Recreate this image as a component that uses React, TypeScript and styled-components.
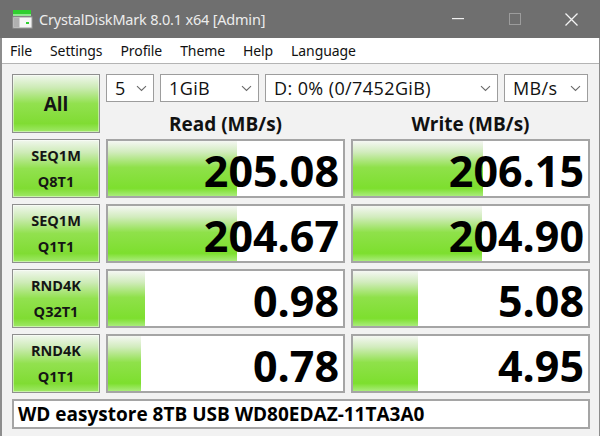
import React from "react";
import styled, { createGlobalStyle } from "styled-components";

const GlobalStyle = createGlobalStyle`
  html, body {
    margin: 0;
    padding: 0;
    background: #ffffff;
  }
  body {
    font-family: "Open Sans", "Noto Sans", sans-serif;
  }
`;

const Window = styled.div`
  width: 600px;
  height: 436px;
  display: flex;
  flex-direction: column;
  box-sizing: border-box;
`;

const TitleBar = styled.div`
  height: 38px;
  background: #6f6f6f;
  display: flex;
  align-items: center;
  padding-left: 12px;
  color: #ececec;
  font-family: "Noto Sans", sans-serif;
  font-size: 14.5px;
  letter-spacing: -0.2px;
`;

const TitleText = styled.span`
  margin-left: 6px;
  flex: 1;
`;

const CaptionButton = styled.div<{ $dim?: boolean }>`
  width: 57px;
  height: 38px;
  display: flex;
  align-items: center;
  justify-content: center;
  opacity: ${(p) => (p.$dim ? 0.35 : 1)};
`;

const Body = styled.div`
  flex: 1;
  display: flex;
  flex-direction: column;
  background: #f2f2f2;
  border: 1px solid #8d8d8d;
  border-top: none;
  border-left-width: 2px;
`;

const MenuBar = styled.div`
  height: 25px;
  background: #ffffff;
  border-bottom: 1px solid #b4b4b4;
  display: flex;
  align-items: center;
  gap: 18px;
  padding-left: 8px;
  font-family: "Noto Sans", sans-serif;
  font-size: 14px;
  color: #111;
  letter-spacing: -0.1px;
`;

const Board = styled.div`
  display: grid;
  grid-template-columns: 88px 1fr 1fr;
  grid-auto-rows: 59px;
  column-gap: 6px;
  row-gap: 6px;
  padding: 10px 9px 0 10px;
`;

const Pill = styled.div<{ $big?: boolean }>`
  box-sizing: border-box;
  border: 1px solid #8f8f8f;
  box-shadow: inset 0 0 0 1px rgba(255, 255, 255, 0.45);
  background: linear-gradient(
    to bottom,
    #f1f7ee 0%,
    #cdebb6 22%,
    #92e14f 50%,
    #80dc33 85%,
    #9fe868 100%
  );
  display: flex;
  flex-direction: column;
  align-items: center;
  justify-content: center;
  font-weight: 700;
  color: #151515;
  font-size: ${(p) => (p.$big ? "19px" : "14.5px")};
  line-height: ${(p) => (p.$big ? "22px" : "26px")};
`;

const HeaderArea = styled.div`
  grid-column: 2 / 4;
  display: grid;
  grid-template-columns: 1fr 1fr;
  grid-template-rows: 28px 1fr;
  column-gap: 6px;
`;

const Controls = styled.div`
  grid-column: 1 / 3;
  display: flex;
  gap: 6px;
`;

const Select = styled.div<{ $w: number }>`
  width: ${(p) => p.$w}px;
  box-sizing: border-box;
  background: #fff;
  border: 1px solid #9d9d9d;
  display: flex;
  align-items: center;
  justify-content: space-between;
  padding: 0 6px 0 8px;
  font-size: 18px;
  color: #111;
  letter-spacing: 0.4px;
`;

const ColumnHead = styled.div`
  display: flex;
  align-items: flex-end;
  justify-content: center;
  font-weight: 700;
  font-size: 19px;
  line-height: 16px;
  color: #111;
  padding-bottom: 1px;
`;

const Cell = styled.div`
  position: relative;
  box-sizing: border-box;
  background: #ffffff;
  border: 2px solid #a5a5a5;
  display: flex;
  align-items: center;
  justify-content: flex-end;
`;

const Fill = styled.div`
  position: absolute;
  left: 0;
  top: 0;
  bottom: 0;
  background: linear-gradient(
    to bottom,
    #f5f7f3 0%,
    #d2ecbe 20%,
    #8fe14a 48%,
    #7ddf2e 86%,
    #a9ec7a 100%
  );
`;

const Score = styled.span`
  position: relative;
  font-weight: 700;
  font-size: 43px;
  line-height: 44px;
  color: #000;
  padding: 4px 4px 0 0;
`;

const Footer = styled.div`
  grid-column: 1 / 4;
  height: 30px;
  box-sizing: border-box;
  background: #fff;
  border: 2px solid #a5a5a5;
  display: flex;
  align-items: center;
  padding-left: 4px;
  font-weight: 700;
  font-size: 19px;
  color: #000;
`;

const Chevron = () => (
  <svg width="11" height="7" viewBox="0 0 11 7">
    <path d="M1 1.2 L5.5 5.5 L10 1.2" fill="none" stroke="#6a6a6a" strokeWidth="1.1" />
  </svg>
);

const AppIcon = () => (
  <svg width="21" height="21" viewBox="0 0 21 21">
    <rect x="1" y="1" width="18" height="4" fill="#2fcf2f" />
    <rect x="1" y="5" width="18" height="2" fill="#8fe88f" />
    <rect x="1" y="8" width="19" height="11" fill="#f4f4f4" stroke="#9a9a9a" strokeWidth="1" />
    <rect x="1.5" y="8.5" width="6" height="10" fill="#b0b0b0" />
    <rect x="14" y="13" width="3" height="2" fill="#2fcf2f" />
  </svg>
);

const rows = [
  { top: "SEQ1M", bottom: "Q8T1", read: "205.08", rw: 129, write: "206.15", ww: 130 },
  { top: "SEQ1M", bottom: "Q1T1", read: "204.67", rw: 129, write: "204.90", ww: 129 },
  { top: "RND4K", bottom: "Q32T1", read: "0.98", rw: 37, write: "5.08", ww: 65 },
  { top: "RND4K", bottom: "Q1T1", read: "0.78", rw: 33, write: "4.95", ww: 65 },
];

const menu = ["File", "Settings", "Profile", "Theme", "Help", "Language"];

const App = (): JSX.Element => {
  return (
    <>
      <GlobalStyle />
      <Window>
        <TitleBar>
          <AppIcon />
          <TitleText>CrystalDiskMark 8.0.1 x64 [Admin]</TitleText>
          <CaptionButton>
            <svg width="12" height="2" viewBox="0 0 12 2">
              <rect width="12" height="1.2" fill="#f0f0f0" />
            </svg>
          </CaptionButton>
          <CaptionButton $dim>
            <svg width="12" height="12" viewBox="0 0 12 12">
              <rect x="0.5" y="0.5" width="11" height="11" fill="none" stroke="#f0f0f0" />
            </svg>
          </CaptionButton>
          <CaptionButton>
            <svg width="13" height="13" viewBox="0 0 13 13">
              <path d="M0.5 0.5 L12.5 12.5 M12.5 0.5 L0.5 12.5" stroke="#f4f4f4" strokeWidth="1.3" />
            </svg>
          </CaptionButton>
        </TitleBar>
        <Body>
          <MenuBar>
            {menu.map((m) => (
              <span key={m}>{m}</span>
            ))}
          </MenuBar>
          <Board>
            <Pill $big>All</Pill>
            <HeaderArea>
              <Controls>
                <Select $w={48}>
                  5<Chevron />
                </Select>
                <Select $w={99}>
                  1GiB<Chevron />
                </Select>
                <Select $w={233}>
                  D: 0% (0/7452GiB)<Chevron />
                </Select>
                <Select $w={84}>
                  MB/s<Chevron />
                </Select>
              </Controls>
              <ColumnHead>Read (MB/s)</ColumnHead>
              <ColumnHead>Write (MB/s)</ColumnHead>
            </HeaderArea>
            {rows.map((r) => (
              <React.Fragment key={r.top + r.bottom}>
                <Pill>
                  <span>{r.top}</span>
                  <span>{r.bottom}</span>
                </Pill>
                <Cell>
                  <Fill style={{ width: r.rw }} />
                  <Score>{r.read}</Score>
                </Cell>
                <Cell>
                  <Fill style={{ width: r.ww }} />
                  <Score>{r.write}</Score>
                </Cell>
              </React.Fragment>
            ))}
            <Footer>WD easystore 8TB USB WD80EDAZ-11TA3A0</Footer>
          </Board>
        </Body>
      </Window>
    </>
  );
};

export default App;
